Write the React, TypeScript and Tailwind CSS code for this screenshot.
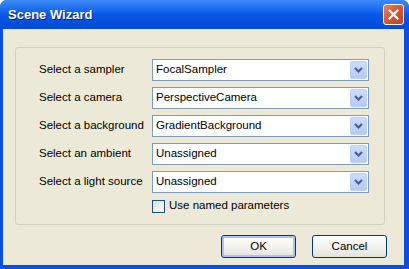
const rows = [
  { label: "Select a sampler", value: "FocalSampler" },
  { label: "Select a camera", value: "PerspectiveCamera" },
  { label: "Select a background", value: "GradientBackground" },
  { label: "Select an ambient", value: "Unassigned" },
  { label: "Select a light source", value: "Unassigned" },
];

const ComboBox = ({ value }: { value: string }) => (
  <div className="flex h-[22px] items-stretch border border-[#7f9db9] bg-white p-px">
    <span className="flex flex-1 items-center pl-[2px] text-black">{value}</span>
    <span className="flex w-[17px] items-center justify-center rounded-[2px] border border-[#bccffa] bg-gradient-to-b from-[#cddcfd] to-[#b6c9f8]">
      <svg width="9" height="6" viewBox="0 0 9 6">
        <polyline points="1,1 4.5,4.5 8,1" fill="none" stroke="#4d6185" strokeWidth="2.2" />
      </svg>
    </span>
  </div>
);

const XpButton = ({ label, isDefault }: { label: string; isDefault?: boolean }) => (
  <button
    type="button"
    className={`h-[23px] w-[75px] rounded-[3px] border border-[#003c74] bg-gradient-to-b from-[#ffffff] via-[#f4f3ee] to-[#e3e2da] text-black ${
      isDefault ? "shadow-[inset_0_0_0_2px_#aac3f5]" : ""
    }`}
  >
    {label}
  </button>
);

export default function App() {
  return (
    <div
      className="flex h-[269px] w-[409px] flex-col overflow-hidden rounded-t-[7px] bg-[#0a4fe0] text-[11.5px]"
      style={{ fontFamily: '"Liberation Sans", Arial, sans-serif' }}
    >
      {/* title bar */}
      <div className="flex h-[29px] items-center justify-between bg-gradient-to-b from-[#3d8cf8] via-[#0858ea] to-[#0349d6] pl-[8px] pr-[5px]">
        <span className="text-[13px] font-bold text-white [text-shadow:1px_1px_0_#0a1883]">
          Scene Wizard
        </span>
        <button
          type="button"
          className="flex h-[21px] w-[21px] items-center justify-center rounded-[3px] border border-white bg-gradient-to-br from-[#e8805c] via-[#d8562c] to-[#c3411a]"
        >
          <svg width="11" height="11" viewBox="0 0 11 11">
            <path d="M1.5 1.5 L9.5 9.5 M9.5 1.5 L1.5 9.5" stroke="white" strokeWidth="2.2" strokeLinecap="square" />
          </svg>
        </button>
      </div>

      {/* client area */}
      <div className="ml-[3px] mr-[5px] mb-[4px] flex flex-1 flex-col bg-[#ece9d8] pl-[12px] pr-[19px] pt-[18px]">
        <div className="grid h-[178px] grid-cols-[113px_1fr] content-start gap-y-[6px] rounded-[3px] border border-[#d0d0bf] pl-[23px] pr-[15px] pt-[11px]">
          {rows.map((r) => (
            <div key={r.label} className="contents">
              <span className="flex items-center text-black">{r.label}</span>
              <ComboBox value={r.value} />
            </div>
          ))}
          <div />
          <label className="flex h-[14px] items-center gap-[4px] text-black">
            <span className="h-[13px] w-[13px] border border-[#1c5180] bg-gradient-to-br from-[#dcdcd7] to-[#ffffff]" />
            Use named parameters
          </label>
        </div>
        <div className="-mr-[2px] mt-[10px] flex justify-end gap-[16px]">
          <XpButton label="OK" isDefault />
          <XpButton label="Cancel" />
        </div>
      </div>
    </div>
  );
}
